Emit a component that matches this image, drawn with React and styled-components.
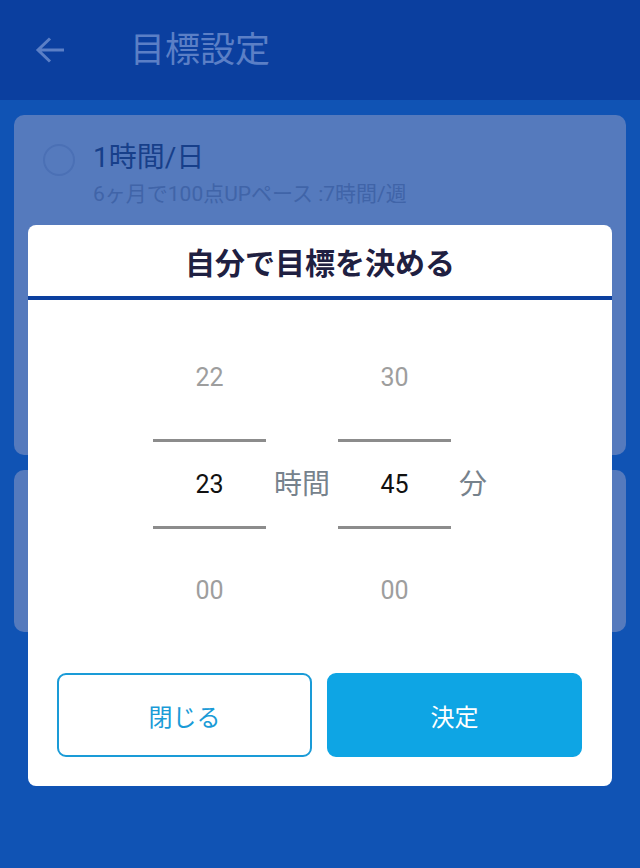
import React from "react";
import styled, { createGlobalStyle } from "styled-components";

const FONT = `"Roboto", "Noto Sans CJK JP", "Noto Sans", sans-serif`;

const GlobalStyle = createGlobalStyle`
  html, body { margin: 0; padding: 0; }
  body {
    background: #1053b4;
    font-family: ${FONT};
  }
  * { box-sizing: border-box; }
`;

const Page = styled.div`
  position: relative;
  width: 640px;
  height: 868px;
  overflow: hidden;
  background: #1053b4;
  font-family: ${FONT};
`;

const Header = styled.header`
  height: 100px;
  background: #0b3f9f;
  display: flex;
  align-items: center;
  padding-left: 35px;
`;

const BackButton = styled.div`
  width: 30px;
  height: 28px;
  display: flex;
  align-items: center;
  justify-content: center;
`;

const HeaderTitle = styled.h1`
  margin: 0 0 0 65px;
  font-size: 35px;
  font-weight: 400;
  color: #5b7fc6;
  line-height: 1;
`;

const CardList = styled.main`
  display: flex;
  flex-direction: column;
  gap: 15px;
  padding: 15px 14px;
`;

const Card = styled.section`
  height: ${(p) => p.$h}px;
  background: #557abd;
  border-radius: 10px;
  display: flex;
  align-items: flex-start;
  padding: 26px 20px 0 29px;
`;

const Radio = styled.span`
  width: 32px;
  height: 32px;
  margin-top: 3px;
  border-radius: 50%;
  border: 2px solid #4b70b5;
  flex: none;
`;

const CardText = styled.div`
  margin-left: 18px;
  display: flex;
  flex-direction: column;
`;

const CardTitle = styled.div`
  font-size: 28px;
  line-height: 34px;
  color: #173f8a;
`;

const CardSub = styled.div`
  margin-top: 5px;
  font-size: 21px;
  line-height: 28px;
  color: #4064a8;
`;

const Dialog = styled.div`
  position: absolute;
  top: 225px;
  left: 28px;
  width: 584px;
  background: #ffffff;
  border-radius: 8px;
  overflow: hidden;
`;

const DialogTitle = styled.h2`
  margin: 0;
  height: 75px;
  border-bottom: 4px solid #0b3f9f;
  display: flex;
  align-items: center;
  justify-content: center;
  font-size: 30px;
  font-weight: 700;
  color: #1f2041;
`;

const PickerRow = styled.div`
  display: flex;
  align-items: center;
  justify-content: center;
  gap: 8px;
  padding-top: 48px;
`;

const Column = styled.div`
  width: 113px;
  display: flex;
  flex-direction: column;
  align-items: center;
`;

const Item = styled.div`
  height: 60px;
  line-height: 60px;
  font-size: 25px;
  color: #9e9e9e;
  text-align: center;
`;

const Selected = styled.div`
  width: 100%;
  height: 90px;
  margin: 31px 0 32px;
  border-top: 3px solid #8c8c8c;
  border-bottom: 3px solid #8c8c8c;
  display: flex;
  align-items: center;
  justify-content: center;
  font-size: 25px;
  color: #111111;
`;

const Unit = styled.div`
  font-size: 28px;
  color: #76828c;
  line-height: 1;
`;

const ButtonRow = styled.div`
  display: flex;
  gap: 15px;
  margin-top: 52px;
  padding: 0 30px 29px 29px;
`;

const Button = styled.button`
  flex: 1;
  height: 84px;
  border-radius: 9px;
  font-family: ${FONT};
  font-size: 24px;
  cursor: pointer;
  border: 2px solid ${(p) => (p.$primary ? "#0ea5e4" : "#1a9bd7")};
  background: ${(p) => (p.$primary ? "#0ea5e4" : "#ffffff")};
  color: ${(p) => (p.$primary ? "#ffffff" : "#1a9bd7")};
`;

function PickerColumn({ prev, value, next }) {
  return (
    <Column>
      <Item>{prev}</Item>
      <Selected>{value}</Selected>
      <Item>{next}</Item>
    </Column>
  );
}

export default function App() {
  return (
    <Page>
      <GlobalStyle />
      <Header>
        <BackButton>
          <svg width="30" height="28" viewBox="0 0 30 28" fill="none">
            <path
              d="M29 14H3M15 2.5L3 14l12 11.5"
              stroke="#5b7fc6"
              strokeWidth="3"
            />
          </svg>
        </BackButton>
        <HeaderTitle>目標設定</HeaderTitle>
      </Header>
      <CardList>
        <Card $h={340}>
          <Radio />
          <CardText>
            <CardTitle>1時間/日</CardTitle>
            <CardSub>6ヶ月で100点UPペース :7時間/週</CardSub>
          </CardText>
        </Card>
        <Card $h={162} />
      </CardList>
      <Dialog>
        <DialogTitle>自分で目標を決める</DialogTitle>
        <PickerRow>
          <PickerColumn prev="22" value="23" next="00" />
          <Unit>時間</Unit>
          <PickerColumn prev="30" value="45" next="00" />
          <Unit>分</Unit>
        </PickerRow>
        <ButtonRow>
          <Button>閉じる</Button>
          <Button $primary>決定</Button>
        </ButtonRow>
      </Dialog>
    </Page>
  );
}
